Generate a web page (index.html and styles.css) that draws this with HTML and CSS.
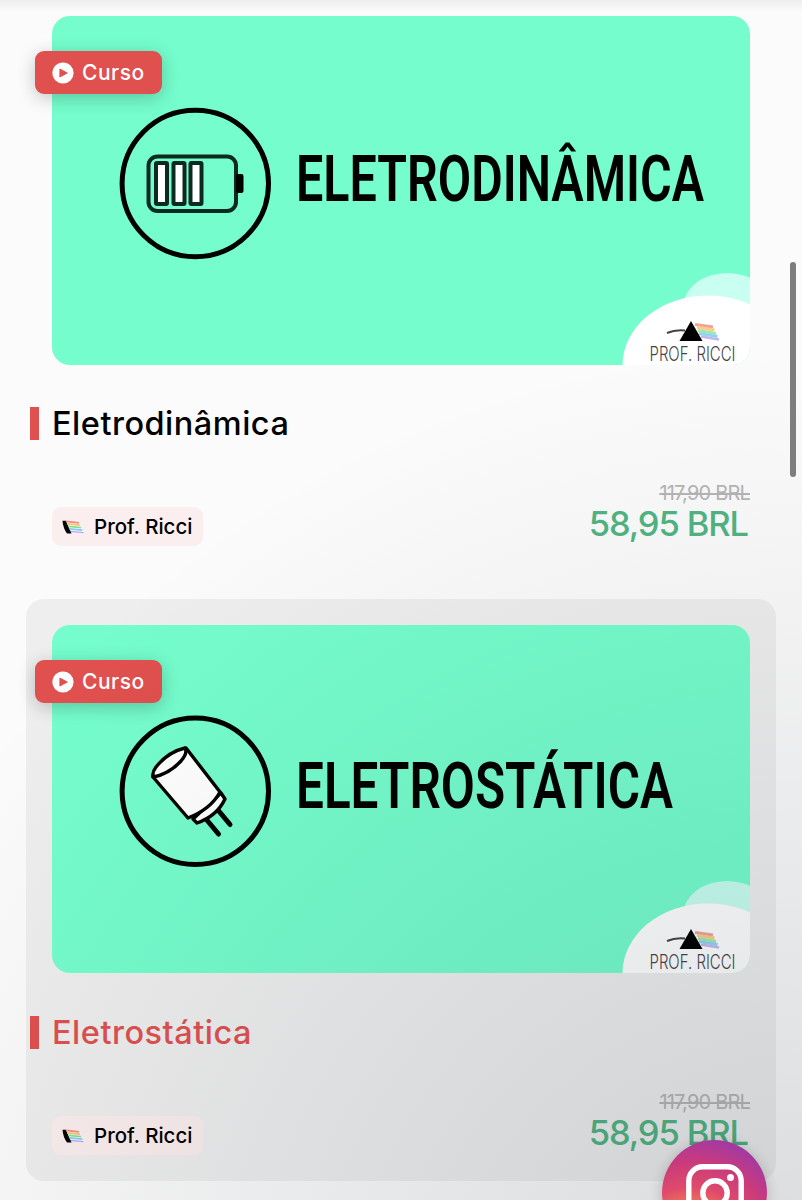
FILE: index.html
```
<!DOCTYPE html>
<html lang="pt-BR">
<head>
    <meta charset="UTF-8">
    <meta name="viewport" content="width=device-width, initial-scale=1.0">
    <title>Prof. Ricci</title>
    <link rel="stylesheet" href="styles.css">
</head>
<body>
    <!-- shared shapes -->
    <svg class="defs" width="0" height="0">
        <symbol id="play" viewBox="0 0 22 22">
            <circle cx="11" cy="11" r="10.6" fill="#fff"/>
            <path d="M8 7.4 L15 11 L8 14.8 Z" fill="#e0504e" stroke="#e0504e" stroke-width="1.2" stroke-linejoin="round"/>
        </symbol>
        <symbol id="prism" viewBox="0 0 22 14">
            <path d="M0.5 0.8 Q1 8 5 13.5 L9.5 13.5 L4 0.8 Z" fill="#000"/>
            <path d="M4 1 L17 2.4 L22 12.6 L9.5 12 Z" fill="#fff"/>
            <path d="M3.8 1.4 L17 2.8" stroke="#f08a80" stroke-width="1.7"/>
            <path d="M5 3.8 L18 5.2" stroke="#f5c46c" stroke-width="1.7"/>
            <path d="M6.2 6.3 L19.3 7.7" stroke="#8bdc9a" stroke-width="1.7"/>
            <path d="M7.5 8.9 L20.4 10.2" stroke="#7fcdf5" stroke-width="1.7"/>
            <path d="M9 11.3 L21.5 12.6" stroke="#b8a2ee" stroke-width="1.3"/>
        </symbol>
    </svg>

    <div class="topbar-shadow"></div>

    <div class="courses">
        <div class="card">
            <div class="cover">
                <svg class="cover-art" viewBox="0 0 698 349">
                    <circle cx="143.3" cy="167.5" r="73.2" fill="none" stroke="#000" stroke-width="5"/>
                    <rect x="96.5" y="140.5" width="87.5" height="54.5" rx="9" fill="none" stroke="#0b2a20" stroke-width="4"/>
                    <rect x="104" y="147" width="11" height="41" rx="1" fill="#fff" stroke="#0b2a20" stroke-width="4"/>
                    <rect x="121.5" y="147" width="11" height="41" rx="1" fill="#fff" stroke="#0b2a20" stroke-width="4"/>
                    <rect x="138.5" y="147" width="11" height="41" rx="1" fill="#fff" stroke="#0b2a20" stroke-width="4"/>
                    <rect x="184" y="158" width="7.5" height="19" rx="2" fill="#000"/>
                    <text class="art-text" x="244" y="184.5" textLength="408" lengthAdjust="spacingAndGlyphs">ELETRODINÂMICA</text>
                </svg>
                <svg class="brand" viewBox="0 0 130 95">
                    <ellipse cx="105" cy="37" rx="44" ry="34" fill="#c8fff0"/>
                    <ellipse cx="86" cy="95" rx="85.5" ry="69.5" fill="#fff"/>
                    <path d="M45 63 Q53 59.5 63 60.5" fill="none" stroke="#444" stroke-width="2"/>
                    <path d="M73 54.5 L91 57" stroke="#f3a09a" stroke-width="3.2"/>
                    <path d="M75 57.5 L92.5 60" stroke="#f6cf85" stroke-width="3.2"/>
                    <path d="M76 60.5 L94 63.5" stroke="#a5e6ac" stroke-width="3.2"/>
                    <path d="M77 63.5 L95.5 66.5" stroke="#8fd4f2" stroke-width="3.2"/>
                    <path d="M79 66.5 L97 69.5" stroke="#c3b5f2" stroke-width="2.6"/>
                    <path d="M69 51 L80.5 71 L57.5 71 Z" fill="#000"/>
                    <text class="brand-text" x="27.5" y="90.5" textLength="86" lengthAdjust="spacingAndGlyphs">PROF. RICCI</text>
                </svg>
            </div>
            <div class="badge"><svg width="22" height="22"><use href="#play"/></svg><span>Curso</span></div>
            <h2 class="title">Eletrodinâmica</h2>
            <div class="footer">
                <div class="author"><svg width="22" height="14"><use href="#prism"/></svg><span>Prof. Ricci</span></div>
                <div class="prices">
                    <span class="old-price">117,90 BRL</span>
                    <span class="price">58,95 BRL</span>
                </div>
            </div>
        </div>

        <div class="card active">
            <div class="cover">
                <svg class="cover-art" viewBox="0 0 698 349">
                    <circle cx="143.3" cy="166.3" r="73.2" fill="none" stroke="#000" stroke-width="5"/>
                    <g stroke="#000" stroke-width="3.4" stroke-linejoin="round" stroke-linecap="round">
                        <path d="M154 194 L166.5 209 M166 185 L178 199.5" fill="none" stroke-width="5"/>
                        <path d="M141 194 L145 198 Q165 191 173 174 L169 168 Z" fill="#fff"/>
                        <path d="M101 152 L136 193 Q159 184 168 167 L134 123 Z" fill="#fff"/>
                        <path d="M101 152 Q100 147 104 142 Q116 127 133 123 Q136 128 129 136 Q117 149 101 152 Z" fill="#fff"/>
                    </g>
                    <text class="art-text" x="244" y="183" textLength="377" lengthAdjust="spacingAndGlyphs">ELETROSTÁTICA</text>
                </svg>
                <svg class="brand" viewBox="0 0 130 95">
                    <ellipse cx="105" cy="36" rx="44" ry="34" fill="#c8fff0"/>
                    <ellipse cx="86" cy="94" rx="85.5" ry="69.5" fill="#fff"/>
                    <path d="M45 62 Q53 58.5 63 59.5" fill="none" stroke="#444" stroke-width="2"/>
                    <path d="M73 53.5 L91 56" stroke="#f3a09a" stroke-width="3.2"/>
                    <path d="M75 56.5 L92.5 59" stroke="#f6cf85" stroke-width="3.2"/>
                    <path d="M76 59.5 L94 62.5" stroke="#a5e6ac" stroke-width="3.2"/>
                    <path d="M77 62.5 L95.5 65.5" stroke="#8fd4f2" stroke-width="3.2"/>
                    <path d="M79 65.5 L97 68.5" stroke="#c3b5f2" stroke-width="2.6"/>
                    <path d="M69 50 L80.5 70 L57.5 70 Z" fill="#000"/>
                    <text class="brand-text" x="27.5" y="89.5" textLength="86" lengthAdjust="spacingAndGlyphs">PROF. RICCI</text>
                </svg>
            </div>
            <div class="badge"><svg width="22" height="22"><use href="#play"/></svg><span>Curso</span></div>
            <h2 class="title">Eletrostática</h2>
            <div class="footer">
                <div class="author"><svg width="22" height="14"><use href="#prism"/></svg><span>Prof. Ricci</span></div>
                <div class="prices">
                    <span class="old-price">117,90 BRL</span>
                    <span class="price">58,95 BRL</span>
                </div>
            </div>
        </div>
    </div>

    <div class="corner-shade"></div>
    <a class="instagram" aria-label="Instagram">
        <svg width="58" height="58" viewBox="0 0 58 58" fill="none" stroke="#fff" stroke-width="5.4">
            <rect x="2.8" y="2.8" width="52.4" height="52.4" rx="14"/>
            <circle cx="29" cy="29" r="12.2"/>
            <circle cx="44.5" cy="13.5" r="3.5" fill="#fff" stroke="none"/>
        </svg>
    </a>
    <div class="scroll-thumb"></div>
</body>
</html>
```

FILE: styles.css
```
* {
    box-sizing: border-box;
}
body {
    margin: 0;
    height: 1200px;
    overflow: hidden;
    position: relative;
    background: #fbfbfb;
    font-family: Inter, "Open Sans", sans-serif;
    color: #000;
}
.defs {
    position: absolute;
}
.topbar-shadow {
    position: absolute;
    top: 0;
    left: 0;
    width: 100%;
    height: 12px;
    background: linear-gradient(#efedee, rgba(251,251,251,0));
}
.courses {
    display: flex;
    flex-direction: column;
    gap: 27px;
    padding: 0 26px;
    margin-top: -10px;
}
.card {
    position: relative;
    height: 582px;
    padding: 26px;
    border-radius: 18px;
}
.card.active {
    background: #eeeeee;
}
.cover {
    position: relative;
    height: 349px;
    border-radius: 18px;
    overflow: hidden;
    background: #75fdcd;
}
.active .cover {
    height: 348px;
    margin-bottom: 43px;
}
.cover-art {
    display: block;
    width: 698px;
    height: 349px;
}
.art-text {
    font: 600 65px Roboto, sans-serif;
}
.brand {
    position: absolute;
    right: -2px;
    top: 254px;
    width: 130px;
    height: 95px;
}
.brand-text {
    font: 300 20px Inter, sans-serif;
    fill: #444;
}
.badge {
    position: absolute;
    top: 61px;
    left: 9px;
    display: flex;
    align-items: center;
    gap: 8px;
    width: 127px;
    height: 43px;
    padding-left: 17px;
    border-radius: 9px;
    background: #e0504e;
    color: #fff;
    font-size: 21px;
    font-weight: 500;
    line-height: 30px;
    letter-spacing: 0.5px;
    box-shadow: 0 4px 18px rgba(0,0,0,0.22);
}
.title {
    margin: 42px 0 42px -22px;
    padding-left: 13px;
    border-left: 9px solid #e0504e;
    font-size: 32.5px;
    font-weight: 500;
    line-height: 33px;
    letter-spacing: 0.5px;
}
.active .title {
    margin-top: 0;
    color: #e0504e;
}
.footer {
    display: flex;
    justify-content: space-between;
    align-items: flex-end;
}
.author {
    display: flex;
    align-items: center;
    gap: 10px;
    width: 151px;
    height: 39px;
    padding-left: 10px;
    border-radius: 9px;
    background: #fbeeee;
    font-size: 20.5px;
    font-weight: 500;
    white-space: nowrap;
}
.prices {
    display: flex;
    flex-direction: column;
    align-items: flex-end;
    height: 64px;
}
.old-price {
    color: #b5b5b5;
    font-size: 20px;
    line-height: 22px;
    text-decoration: line-through;
    letter-spacing: -0.8px;
}
.price {
    margin-right: 2px;
    color: #50b482;
    font-size: 34.5px;
    font-weight: 500;
    line-height: 40px;
    letter-spacing: -1.1px;
}
.corner-shade {
    position: absolute;
    right: 0;
    top: 360px;
    width: 1000px;
    height: 1000px;
    background: radial-gradient(ellipse at bottom right, rgba(29,39,54,0.16) 0%, rgba(29,39,54,0) 72%);
    pointer-events: none;
}
.instagram {
    position: absolute;
    left: 662px;
    top: 1140px;
    display: flex;
    justify-content: center;
    align-items: center;
    width: 105px;
    height: 105px;
    border-radius: 50%;
    background: radial-gradient(circle at 28% 100%, #fdc468 0%, #fa9050 22%, #df4a6a 45%, #c93a7d 65%, #8a3ab8 95%);
    box-shadow: 0 2px 14px rgba(0,0,0,0.2);
}
.scroll-thumb {
    position: absolute;
    left: 790px;
    top: 262px;
    width: 6px;
    height: 215px;
    border-radius: 3px;
    background: #7d7d7d;
}
```
